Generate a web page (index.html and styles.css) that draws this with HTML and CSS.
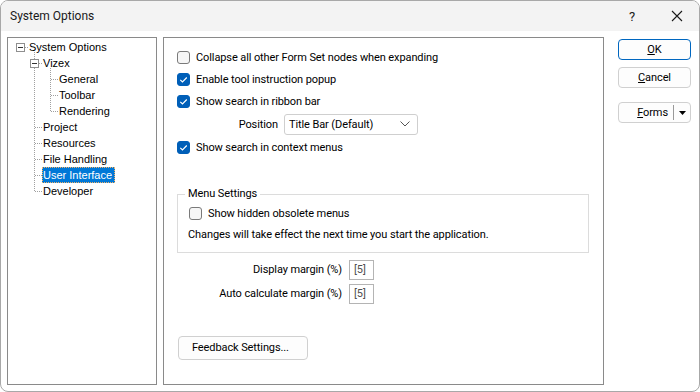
FILE: index.html
```html
<!DOCTYPE html>
<html>
<head>
<meta charset="utf-8">
<link rel="stylesheet" href="styles.css">
</head>
<body>
<div class="window">
  <div class="titlebar">
    <span class="title">System Options</span>
    <span class="tb-help">?</span>
    <span class="tb-close"><svg width="12" height="12" viewBox="0 0 12 12"><path d="M1 1 L11 11 M11 1 L1 11" stroke="#1a1a1a" stroke-width="1.1" fill="none"/></svg></span>
  </div>
  <div class="body">
    <div class="tree">
      <svg class="tree-lines" width="148" height="200" viewBox="0 0 148 200" shape-rendering="crispEdges">
        <g stroke="#a0a0a0" stroke-width="1" stroke-dasharray="1 1" fill="none">
          <path d="M17 9.5 H21"/>
          <path d="M26.5 14 V153"/>
          <path d="M27 89.5 H34 M27 105.5 H34 M27 121.5 H34 M27 137.5 H34 M27 153.5 H34"/>
          <path d="M31 25.5 H34"/>
          <path d="M42.5 30 V73"/>
          <path d="M43 41.5 H50 M43 57.5 H50 M43 73.5 H50"/>
        </g>
        <g stroke="#8f8f8f" fill="#fff">
          <rect x="8.5" y="5.5" width="8" height="8"/>
          <rect x="22.5" y="21.5" width="8" height="8"/>
        </g>
        <g stroke="#333" fill="none">
          <path d="M10 9.5 H15 M24 25.5 H29"/>
        </g>
      </svg>
      <div class="row l0">System Options</div>
      <div class="row l1">Vizex</div>
      <div class="row l2">General</div>
      <div class="row l2">Toolbar</div>
      <div class="row l2">Rendering</div>
      <div class="row l1">Project</div>
      <div class="row l1">Resources</div>
      <div class="row l1">File Handling</div>
      <div class="row l1"><span class="sel">User Interface</span></div>
      <div class="row l1">Developer</div>
    </div>

    <div class="panel">
      <div class="check-row"><span class="cb"></span><span>Collapse all other Form Set nodes when expanding</span></div>
      <div class="check-row"><span class="cb on"><svg width="13" height="13" viewBox="0 0 13 13"><path d="M3.3 6.8 L5.5 9 L9.8 4.5" stroke="#fff" stroke-width="1.2" fill="none"/></svg></span><span>Enable tool instruction popup</span></div>
      <div class="check-row"><span class="cb on"><svg width="13" height="13" viewBox="0 0 13 13"><path d="M3.3 6.8 L5.5 9 L9.8 4.5" stroke="#fff" stroke-width="1.2" fill="none"/></svg></span><span>Show search in ribbon bar</span></div>
      <div class="position-row">
        <span class="pos-label">Position</span>
        <div class="select"><span>Title Bar (Default)</span><svg width="10" height="6" viewBox="0 0 10 6"><path d="M0.5 0.5 L5 5 L9.5 0.5" stroke="#555" stroke-width="1" fill="none"/></svg></div>
      </div>
      <div class="check-row"><span class="cb on"><svg width="13" height="13" viewBox="0 0 13 13"><path d="M3.3 6.8 L5.5 9 L9.8 4.5" stroke="#fff" stroke-width="1.2" fill="none"/></svg></span><span>Show search in context menus</span></div>

      <fieldset class="group">
        <legend>Menu Settings</legend>
        <div class="check-row small"><span class="cb"></span><span>Show hidden obsolete menus</span></div>
        <div class="note">Changes will take effect the next time you start the application.</div>
      </fieldset>

      <div class="margins">
        <span class="m-label">Display margin (%)</span><span class="m-box">[5]</span>
        <span class="m-label">Auto calculate margin (%)</span><span class="m-box">[5]</span>
      </div>

      <div class="feedback">Feedback Settings...</div>
    </div>

    <div class="buttons">
      <div class="btn default"><span><u>O</u>K</span></div>
      <div class="btn"><span><u>C</u>ancel</span></div>
      <div class="btn split">
        <span class="split-main"><u>F</u>orms</span>
        <span class="split-sep"></span>
        <span class="split-arrow"><svg width="7" height="4" viewBox="0 0 7 4"><path d="M0 0 H7 L3.5 4 Z" fill="#000"/></svg></span>
      </div>
    </div>
  </div>
</div>
</body>
</html>
```

FILE: styles.css
```css
html, body {
  margin: 0;
  padding: 0;
  background: #ffffff;
}

.window {
  width: 700px;
  height: 392px;
  box-sizing: border-box;
  border: 1px solid #a8a8a8;
  border-radius: 8px;
  overflow: hidden;
  display: flex;
  flex-direction: column;
  background: #ffffff;
  font-family: Roboto, Lato, sans-serif;
  font-size: 11px;
  letter-spacing: -0.1px;
  color: #000;
}

.titlebar {
  height: 30px;
  flex: none;
  background: #f3f3f3;
  display: flex;
  align-items: center;
  padding-left: 9px;
}

.title {
  flex: 1;
  font-size: 12px;
  letter-spacing: 0;
  color: #1a1a1a;
}

.tb-help {
  width: 12px;
  text-align: center;
  font-size: 13px;
  color: #1a1a1a;
  margin-right: 33px;
}

.tb-close {
  display: flex;
  margin-right: 16px;
}

.body {
  flex: 1;
  display: flex;
  padding: 6px 8px 6px 6px;
  min-height: 0;
}

/* Tree */
.tree {
  position: relative;
  width: 150px;
  flex: none;
  box-sizing: border-box;
  border: 1px solid #8a8a8a;
  padding-top: 1px;
  font-family: "Liberation Sans", Arial, sans-serif;
  font-size: 11px;
  letter-spacing: 0;
  background: #fff;
}

.tree-lines {
  position: absolute;
  left: 0;
  top: 0;
}

.row {
  position: relative;
  height: 16px;
  line-height: 16px;
  white-space: nowrap;
}

.l0 { padding-left: 21px; }
.l1 { padding-left: 35px; }
.l2 { padding-left: 51px; }

.sel {
  display: inline-block;
  height: 16px;
  box-sizing: border-box;
  margin-left: -1px;
  padding: 0 2px 0 0;
  line-height: 14px;
  background: #0078d7;
  color: #fff;
  border: 1px dotted #f2b36a;
}

/* Main panel */
.panel {
  width: 441px;
  flex: none;
  box-sizing: border-box;
  margin-left: 6px;
  border: 1px solid #8a8a8a;
  padding: 8px 0 0 13px;
  display: flex;
  flex-direction: column;
}

.check-row {
  height: 22px;
  display: flex;
  align-items: center;
  gap: 6px;
  white-space: nowrap;
}

.check-row.small {
  height: 18px;
  margin-top: 2px;
}

.cb {
  width: 13px;
  height: 13px;
  box-sizing: border-box;
  border: 1px solid #7a7a7a;
  border-radius: 3px;
  background: #f6f6f6;
  display: flex;
  flex: none;
}

.cb.on {
  background: #005fb8;
  border-color: #005fb8;
}

.cb.on svg {
  margin: -1px;
}

.position-row {
  height: 24px;
  display: flex;
  align-items: center;
  gap: 6px;
}

.pos-label {
  width: 101px;
  text-align: right;
}

.select {
  width: 134px;
  height: 21px;
  box-sizing: border-box;
  border: 1px solid #cfcfcf;
  border-radius: 3px;
  background: #fff;
  display: flex;
  align-items: center;
  justify-content: space-between;
  padding: 0 7px 0 4px;
}

.group {
  margin: 28px 14px 0 0;
  padding: 0 10px 9px 11px;
  border: 1px solid #dcdcdc;
  min-width: 0;
}

.group legend {
  padding: 0 3px;
  margin-left: -4px;
  line-height: 16px;
}

.note {
  margin-top: 5px;
  margin-left: -1px;
  line-height: 16px;
  white-space: nowrap;
}

.margins {
  margin-top: 7px;
  display: grid;
  grid-template-columns: 165px 25px;
  column-gap: 7px;
  row-gap: 4px;
}

.m-label {
  height: 20px;
  line-height: 20px;
  text-align: right;
  white-space: nowrap;
}

.m-box {
  height: 20px;
  box-sizing: border-box;
  border: 1px solid #b4b4b4;
  line-height: 18px;
  color: #505050;
  padding-left: 4px;
}

.feedback {
  margin-top: 32px;
  margin-left: 1px;
  width: 130px;
  height: 24px;
  box-sizing: border-box;
  border: 1px solid #d0d0d0;
  border-radius: 4px;
  background: #fdfdfd;
  line-height: 22px;
  padding-left: 13px;
}

/* Buttons */
.buttons {
  margin-left: 14px;
  width: 73px;
  flex: none;
  display: flex;
  flex-direction: column;
  padding-top: 2px;
}

.btn {
  height: 21px;
  box-sizing: border-box;
  border: 1px solid #d0d0d0;
  border-radius: 4px;
  background: #fdfdfd;
  display: flex;
  align-items: center;
  justify-content: center;
  margin-bottom: 7px;
}

.btn.default {
  border-color: #0067c0;
}

.btn.split {
  margin-top: 7px;
  justify-content: flex-start;
}

.split-main {
  width: 54px;
  box-sizing: border-box;
  text-align: right;
  padding-right: 5px;
}

.split-sep {
  width: 1px;
  height: 15px;
  background: #9a9a9a;
}

.split-arrow {
  flex: 1;
  display: flex;
  justify-content: center;
}
```
